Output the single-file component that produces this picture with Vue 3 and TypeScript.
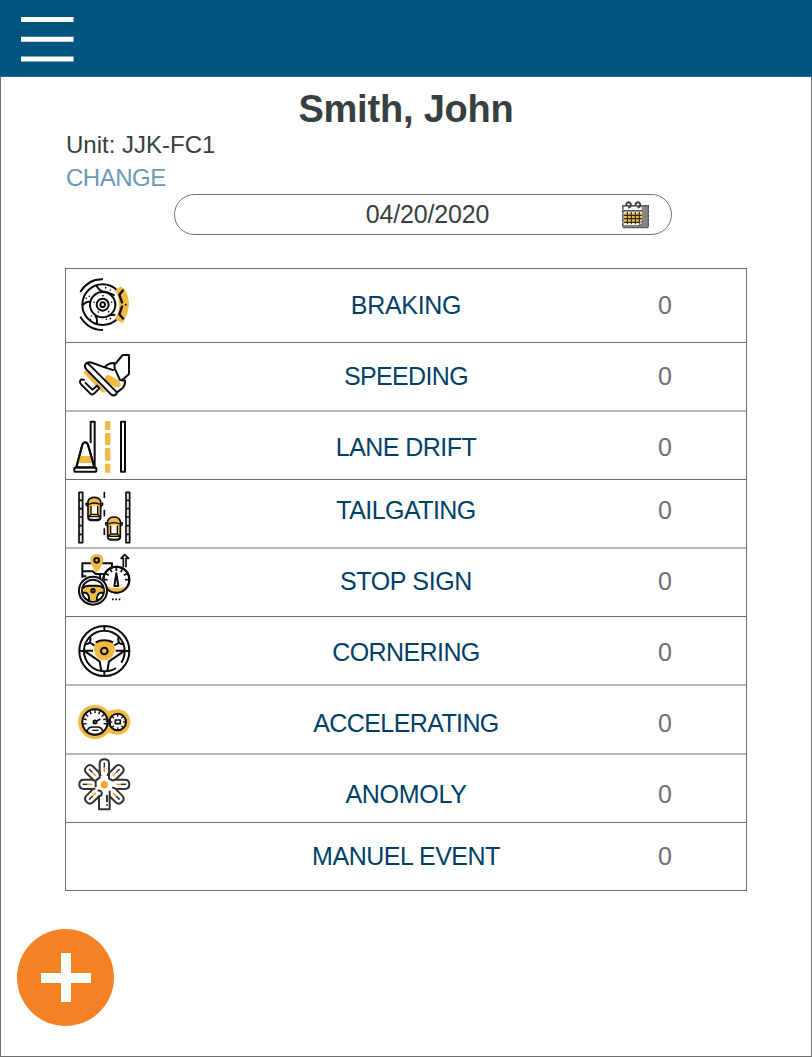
<script setup lang="ts">
interface EventRow {
  label: string
  count: number
  icon: string
  height: number
  baseline: number
  soft?: boolean
  track: string
}

const rows: EventRow[] = [
  { label: 'BRAKING', count: 0, icon: 'brake', height: 74, baseline: 46, track: '-0.3px' },
  { label: 'SPEEDING', count: 0, icon: 'pedal', height: 68, baseline: 43, track: '-0.62px' },
  { label: 'LANE DRIFT', count: 0, icon: 'lane', height: 69, baseline: 46, soft: true, track: '-0.55px' },
  { label: 'TAILGATING', count: 0, icon: 'tail', height: 68, baseline: 40, track: '-0.55px' },
  { label: 'STOP SIGN', count: 0, icon: 'stop', height: 69, baseline: 43, soft: true, track: '-0.35px' },
  { label: 'CORNERING', count: 0, icon: 'wheel', height: 68, baseline: 45, track: '-0.6px' },
  { label: 'ACCELERATING', count: 0, icon: 'gauge', height: 69, baseline: 48, soft: true, track: '-0.6px' },
  { label: 'ANOMOLY', count: 0, icon: 'burst', height: 69, baseline: 50, soft: true, track: '-0.3px' },
  { label: 'MANUEL EVENT', count: 0, icon: '', height: 68, baseline: 43, track: '-0.48px' },
]

const ticks = (from: number, to: number, step: number): number[] => {
  const out: number[] = []
  for (let a = from; a <= to; a += step) out.push(a)
  return out
}
</script>

<template>
  <div class="screen">
    <header class="bar">
      <svg class="menu" viewBox="0 0 53 45" role="img" aria-label="Menu">
        <path d="M0 2.5H52.6M0 22.3H52.6M0 42H52.6" stroke="#fff" stroke-width="5" />
      </svg>
    </header>

    <main class="body">
      <h1 class="name">Smith, John</h1>
      <div class="unit">Unit: JJK-FC1</div>
      <a class="change">CHANGE</a>

      <div class="date">
        <span class="date-text">04/20/2020</span>
        <svg class="calendar" viewBox="66 48 84 84">
          <path d="M69 60H146V125Q146 129 141 129H73Q68 129 68 124Z" fill="#858585" />
          <path d="M71 65H125V75H71ZM71 80H126V106L117 120H71Z" fill="#fff" />
          <path d="M73 83H125V106L118 115H73Z" fill="#f1ba42" />
          <path d="M82 81V118M94 81V118M106 81V118M118 81V116M72 91H126M72 101H126M72 112H119" stroke="#332b1a" stroke-width="3.5" />
          <path d="M68 77H128M68 61V124Q68 128 73 128H141Q145 128 145 123V62H68M118 122L127 109" fill="none" stroke="#555" stroke-width="4" stroke-dasharray="11 2" />
          <path d="M79 63Q77 53 86 52Q96 54 91 65L85 69M107 63Q105 53 114 52Q124 54 119 65L113 69" fill="none" stroke="#444" stroke-width="6" />
          <path d="M116 123Q119 111 128 108L126 117Z" fill="#fff" stroke="#333" stroke-width="2" />
        </svg>
      </div>

      <section class="events">
        <div
          v-for="row in rows"
          :key="row.label"
          class="row"
          :class="{ soft: row.soft }"
          :style="{ height: row.height + 'px' }"
        >
          <div class="icon-cell">
            <svg v-if="row.icon === 'brake'" class="icon tall ink" viewBox="18 21 210 219">
              <path d="M129 52Q85 51 61 90M61 164Q85 204 129 204" stroke-width="6" />
              <circle cx="128" cy="128" r="61" />
              <path d="M181 73L194 82Q222 128 188 184L165 171Q190 128 165 86Z" fill="#f1ba42" stroke="none" />
              <circle cx="128" cy="128" r="38" /><circle cx="128" cy="128" r="18" /><circle cx="128" cy="128" r="7" />
              <path d="M109 69Q115 89 142 91L164 100M67 130Q80 116 92 120M109 187Q115 172 105 160M146 160L166 158" />
              <path d="M190 83L178 98L187 124M187 131L178 157L191 172" stroke-width="7" />
              <g fill="#0c0c0c" stroke="none">
                <circle cx="137" cy="77" r="2.5" /><circle cx="151" cy="84" r="2.5" /><circle cx="79" cy="109" r="2.5" /><circle cx="88" cy="103" r="2.5" /><circle cx="94" cy="162" r="2.5" /><circle cx="91" cy="173" r="2.5" /><circle cx="139" cy="172" r="2.5" /><circle cx="151" cy="170" r="2.5" /><circle cx="129" cy="101" r="2.5" /><circle cx="155" cy="121" r="2.5" /><circle cx="102" cy="121" r="2.5" /><circle cx="115" cy="150" r="2.5" /><circle cx="146" cy="149" r="2.5" /><circle cx="197" cy="128" r="3" />
              </g>
            </svg>

            <svg v-else-if="row.icon === 'pedal'" class="icon ink" viewBox="18 9 210 201">
              <path d="M74 93Q69 99 77 106L124 155Q131 160 138 155L80 92Z" fill="#f1ba42" stroke="none" />
              <path d="M135 112Q138 103 150 106L176 122Q185 130 182 138Q174 144 163 140L141 127Q133 120 135 112Z" fill="#f1ba42" stroke="none" />
              <path d="M77 71Q82 67 90 76L168 154Q173 160 166 165Q160 168 153 163L78 87Q72 79 77 71Z" />
              <path d="M80 69Q88 65 98 69L134 82Q145 68 163 69L164 85L180 120L195 122Q196 136 188 144L171 157M134 82L162 91M164 74L188 45H207V102L187 120" />
              <path d="M74 120Q62 115 60 124Q59 129 64 134L91 161Q97 166 103 160L118 145L111 137L97 149L75 127" />
            </svg>

            <svg v-else-if="row.icon === 'lane'" class="icon ink" viewBox="18 12 210 201">
              <path d="M92 105V41H104V178M183 41H195V191H183Z" />
              <path d="M135 39H151V66H135ZM135 75H151V111H135ZM135 120H151V158H135ZM135 167H151V194H135Z" fill="#f1ba42" stroke="none" />
              <path d="M49 178L67 110Q70 103 75 103Q81 103 84 110L103 178Z" fill="#fff" />
              <path d="M59 144H91L97 165H53Z" fill="#f1ba42" stroke="none" />
              <path d="M49 178L67 110Q70 103 75 103Q81 103 84 110L103 178" />
              <rect x="43" y="179" width="66" height="12" rx="2" fill="#fff" />
            </svg>

            <svg v-else-if="row.icon === 'tail'" class="icon ink" viewBox="18 6 210 201">
              <path d="M57 43H68V194H57ZM198 43H209V194H198ZM57 67H68M57 92H68M57 117H68M57 143H68M57 169H68M198 67H209M198 92H209M198 117H209M198 143H209M198 169H209" fill="#e4e4e4" stroke-width="5" />
              <path d="M133 41V60M133 95V115M133 151V171" stroke-width="5" />
              <g v-for="car in [[103, 92], [162, 151]]" :key="car[0]" :transform="`translate(${car[0]} ${car[1]})`">
                <path d="M-19 -22Q-15 -34 0 -34Q15 -34 19 -22V26Q18 35 9 35H-9Q-18 35 -19 26Z" fill="#f1ba42" stroke-width="5" />
                <path d="M-9 -9H9V18H-9Z" fill="#fff" stroke="none" />
                <path d="M-16 -13Q0 -21 16 -13M-10 -8V17M10 -8V17M-17 24L-10 17H10L17 24M-18 -13L-25 -17V-11L-19 -6M18 -13L25 -17V-11L19 -6" stroke-width="4" />
                <path d="M-17 24H17V31Q0 35 -17 31Z" fill="#fff" stroke-width="4" />
              </g>
            </svg>

            <svg v-else-if="row.icon === 'stop'" class="icon ink" viewBox="18 9 210 201">
              <path d="M94 52H67V95M67 76H99L107 84H154M125 52H156V66M67 91H79M120 84V106" />
              <path d="M110 81Q91 58 91 42Q91 24 110 24Q130 24 130 42Q129 58 110 81Z" fill="#f1ba42" stroke="none" />
              <circle cx="110" cy="43" r="7" />
              <circle cx="169" cy="101" r="39" fill="#fff" />
              <path d="M135 120Q169 132 203 120Q195 140 169 140Q145 140 135 120Z" fill="#f1ba42" stroke="none" />
              <circle cx="169" cy="101" r="39" />
              <path v-for="a in ticks(-90, 90, 30)" :key="a" d="M169 62V75" :transform="`rotate(${a} 169 101)`" stroke-width="5" />
              <path d="M163 120L169 82L175 120Z" />
              <path d="M190 64V37H183L194 26L206 37H198V64" stroke-width="5" />
              <circle cx="99" cy="134" r="42" fill="#fff" />
              <circle cx="99" cy="134" r="33" />
              <path d="M69 127Q98 110 130 127V138L110 142L106 165H92L88 142L68 138Z" fill="#f1ba42" stroke="none" />
              <path d="M67 127Q75 119 88 119H110Q123 119 131 127M67 140H77Q88 142 88 166M131 140H121Q110 142 110 166" />
              <circle cx="99" cy="134" r="5" />
              <path d="M156 160H161M166 160H171M176 160H181" stroke-width="5" />
            </svg>

            <svg v-else-if="row.icon === 'wheel'" class="icon ink" viewBox="18 6 210 201">
              <circle cx="133" cy="108" r="75" />
              <path d="M184 143Q194 128 194 108A61 61 0 1 0 133 169Q154 169 168 159M133 33V47M58 108H72M194 108H208M133 169V183" />
              <path d="M103 91Q107 77 133 77Q159 77 163 91Q169 110 153 128Q144 136 133 136Q122 136 113 128Q97 110 103 91Z" fill="#f1ba42" stroke="none" />
              <path d="M76 87Q92 88 91 74V65M190 87Q174 88 175 74V65M91 84L103 91M175 84L163 91M107 82Q117 76 133 76Q149 76 159 82M73 107H99M193 107H167M75 109L119 139L124 168M191 109L147 139L142 168" />
              <circle cx="133" cy="108" r="10" />
            </svg>

            <svg v-else-if="row.icon === 'gauge'" class="icon ink" viewBox="18 6 210 201">
              <circle cx="105" cy="114" r="51" fill="#f1ba42" stroke="none" />
              <circle cx="173" cy="114" r="38" fill="#f1ba42" stroke="none" />
              <path d="M138 79Q150 82 160 77V151Q150 145 138 149Z" fill="#f1ba42" stroke="none" />
              <circle cx="105" cy="114" r="38" fill="#fff" />
              <circle cx="173" cy="114" r="25" fill="#fff" />
              <path v-for="a in ticks(-100, 100, 25)" :key="a" d="M105 78V88" :transform="`rotate(${a} 105 114)`" stroke-width="4" />
              <path v-for="a in ticks(0, 315, 45)" :key="'s' + a" d="M173 91V98" :transform="`rotate(${a} 173 114)`" stroke-width="4" />
              <circle cx="105" cy="114" r="4.5" />
              <path d="M109 112L121 105M137 111H153M139 119H153M166 108H181V119H166Z" stroke-width="5" />
              <path d="M81 143Q84 129 98 129H112Q125 129 129 143Q119 152 105 152Q91 152 81 143Z" fill="#fff" stroke-width="5" />
              <path d="M97 139H115" stroke-width="4" />
            </svg>

            <svg v-else-if="row.icon === 'burst'" class="icon ink gray" viewBox="18 15 210 201">
              <g v-for="a in [-135, -90, -45, 0, 45, 90, 135]" :key="a" :transform="`rotate(${a} 133 103)`">
                <path d="M123 80L119 72V41Q119 28 133 28Q147 28 147 41V72L143 80" fill="#fff" />
                <path d="M133 38V53" stroke-width="4.5" />
                <path d="M133 53V67" stroke="#f79a1f" stroke-width="4.5" />
              </g>
              <path d="M119 78H147L158 94V108L149 119V178H117V138L106 121V91Z" fill="#fff" stroke="none" />
              <path d="M119 64V83L107 92V111M147 64V86L158 92M149 122V178H117V139Q128 136 125 127Q122 121 113 122M141 135V157M141 163V167" />
              <circle cx="133" cy="104" r="11" fill="#f9a62d" stroke="none" />
            </svg>
          </div>
          <div class="label" :style="{ paddingTop: row.baseline - 24 - (row.soft ? 2 : 1) + 'px', letterSpacing: row.track }">{{ row.label }}</div>
          <div class="count" :style="{ paddingTop: row.baseline - 24 - (row.soft ? 2 : 1) + 'px' }">{{ row.count }}</div>
        </div>
      </section>

      <button class="add" type="button" aria-label="Add event">
        <svg viewBox="0 0 97 97"><path d="M24 49H74M49 24V73" stroke="#fff" stroke-width="10" /></svg>
      </button>
    </main>
  </div>
</template>

<style>
body {
  margin: 0;
  background: #fff;
}
</style>

<style scoped>
.screen {
  width: 812px;
  height: 1057px;
  box-sizing: border-box;
  overflow: hidden;
  font-family: "Liberation Sans", Arial, sans-serif;
  font-size: 25px;
  line-height: 30px;
  color: #373f41;
  background: #fff;
}
.bar {
  height: 77px;
  box-sizing: border-box;
  padding: 17px 0 0 21px;
  background: #005480;
  border-bottom: 1px solid #236b91;
}
.menu {
  display: block;
  width: 53px;
  height: 45px;
}
.body {
  height: 980px;
  box-sizing: border-box;
  border: 1px solid #707070;
  border-top: 0;
  padding: 10px 64px 0;
}
.name {
  margin: 0;
  height: 43px;
  font-size: 38px;
  line-height: 44px;
  font-weight: 700;
  text-align: center;
  letter-spacing: -0.2px;
}
.unit {
  height: 33px;
  padding-left: 1px;
  font-size: 24px;
}
.change {
  display: block;
  height: 31px;
  padding-left: 1px;
  font-size: 24px;
  color: #6a9ab8;
  letter-spacing: -0.5px;
}
.date {
  display: flex;
  width: 498px;
  height: 41px;
  box-sizing: border-box;
  margin-left: 109px;
  border: 1px solid #707070;
  border-radius: 21px;
}
.date-text {
  width: 497px;
  padding: 5px 0 0 4px;
  flex: none;
  text-align: center;
  line-height: 29px;
  letter-spacing: -0.15px;
}
.calendar {
  flex: none;
  width: 28px;
  height: 28px;
  margin: 6px 0 0 -54px;
}
.events {
  margin-top: 33px;
  width: 682px;
  box-sizing: border-box;
  border: solid #707070;
  border-width: 0 1px 1px;
}
.row {
  display: grid;
  grid-template-columns: 70px 540px 70px;
  box-sizing: border-box;
  border-top: 1px solid #707070;
}
.row.soft {
  border-top: 2px solid #b7b7b7;
}
.icon-cell {
  height: 66px;
}
.icon {
  display: block;
  width: 70px;
  height: 67px;
}
.icon.tall {
  height: 73px;
}
.ink {
  fill: none;
  stroke: #0c0c0c;
  stroke-width: 6px;
  stroke-linejoin: round;
}
.ink.gray {
  stroke: #333;
}
.label {
  color: #003f66;
  text-align: center;
}
.count {
  margin-left: -46px;
  width: 70px;
  color: #707070;
  text-align: center;
}
.add {
  display: block;
  width: 97px;
  height: 97px;
  margin: 38px 0 0 -48px;
  padding: 0;
  border: 0;
  border-radius: 50%;
  background: #f48124;
}
.add svg {
  display: block;
}
</style>
